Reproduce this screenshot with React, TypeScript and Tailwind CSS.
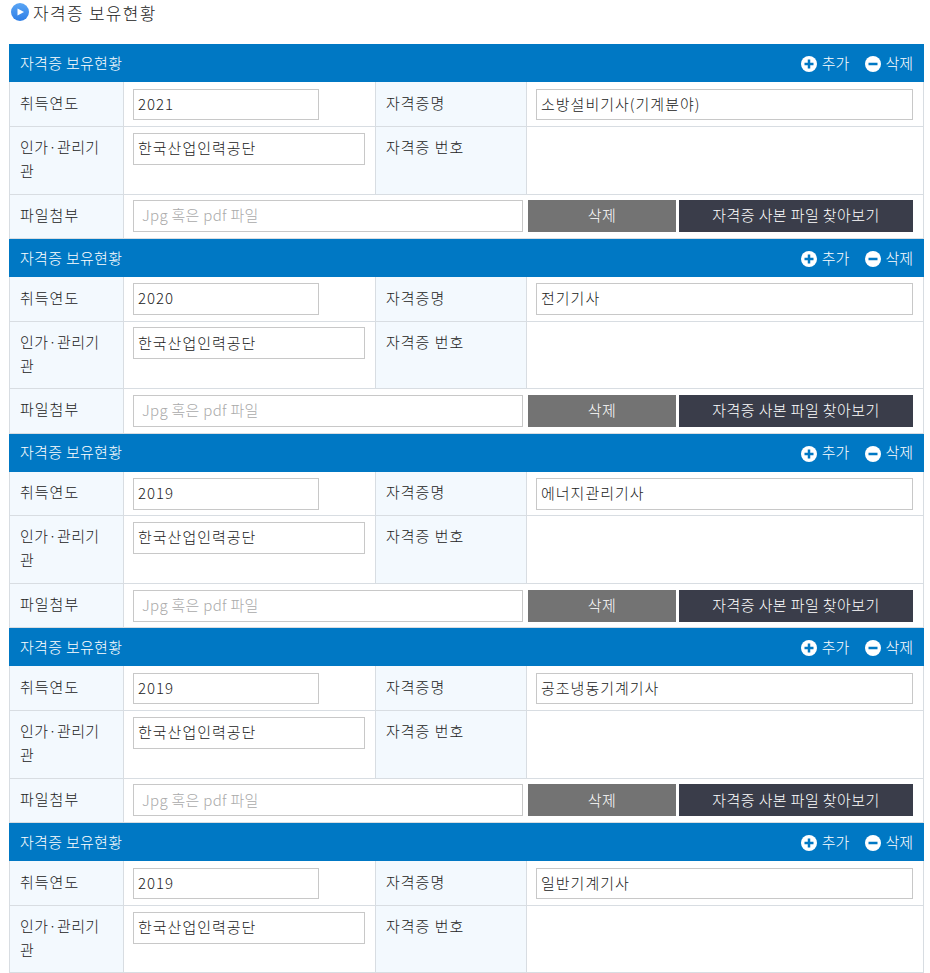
const font = { fontFamily: '"Noto Sans CJK KR", "Liberation Sans", sans-serif' };

const records = [
  { year: "2021", name: "소방설비기사(기계분야)" },
  { year: "2020", name: "전기기사" },
  { year: "2019", name: "에너지관리기사" },
  { year: "2019", name: "공조냉동기계기사" },
  { year: "2019", name: "일반기계기사" },
];

function RoundIcon({ plus }: { plus?: boolean }) {
  return (
    <svg width="16" height="16" viewBox="0 0 16 16" className="mt-[2px] shrink-0">
      <circle cx="8" cy="8" r="8" fill="#fff" />
      <rect x="3.5" y="6.75" width="9" height="2.5" fill="#0078c4" />
      {plus && <rect x="6.75" y="3.5" width="2.5" height="9" fill="#0078c4" />}
    </svg>
  );
}

function Field({ value, className }: { value: string; className: string }) {
  return (
    <div className={`flex items-center border border-[#c8c8c8] bg-white pb-[1px] pl-[4px] text-[15px] font-light tracking-[1px] text-[#222] ${className}`}>
      {value}
    </div>
  );
}

function Label({ children, className = "" }: { children: React.ReactNode; className?: string }) {
  return <div className={`bg-[#f3f9fe] pl-[10px] text-[15px] font-light leading-[24px] tracking-[1px] text-[#222] ${className}`}>{children}</div>;
}

function Card({ year, name, last }: { year: string; name: string; last?: boolean }) {
  const midRow = last ? "h-[67px]" : "h-[67.75px]";
  return (
    <section className={last ? "" : "h-[194.75px] overflow-hidden"}>
      <div className="flex h-[38px] items-center justify-between bg-[#0078c4] pl-[11px] pr-[11px] text-[15px] font-light text-white">
        <span className="tracking-[0.3px]">자격증 보유현황</span>
        <div className="flex items-center gap-[16px]">
          <span className="flex items-center gap-[5px]"><RoundIcon plus />추가</span>
          <span className="flex items-center gap-[4px]"><RoundIcon />삭제</span>
        </div>
      </div>
      <div className="grid grid-cols-[114px_251px_152px_1fr] border-x border-[#d8dde2] [&>*]:border-b [&>*]:border-[#d8dde2]">
        <Label className="flex h-[44.75px] items-center border-r !border-r-[#d8dde2] pb-[2px]">취득연도</Label>
        <div className="flex h-[44.75px] items-start pl-[9px] pt-[6.5px]"><Field value={year} className="h-[31.5px] w-[186px]" /></div>
        <Label className="flex h-[44.75px] items-center border-x !border-x-[#d8dde2] pb-[2px]">자격증명</Label>
        <div className="flex h-[44.75px] items-start pl-[9px] pt-[6.5px]"><Field value={name} className="h-[31.5px] w-[377px]" /></div>

        <Label className={`${midRow} border-r !border-r-[#d8dde2] pr-[14px] pt-[8px] !tracking-[0.4px]`}>인가·관리기관</Label>
        <div className={`${midRow} pl-[9px] pt-[5.75px]`}><Field value="한국산업인력공단" className="h-[32px] w-[232px]" /></div>
        <Label className={`${midRow} border-x !border-x-[#d8dde2] pt-[8px]`}>자격증 번호</Label>
        <div className={midRow} />

        {!last && (
          <>
            <Label className="flex h-[44.25px] items-center border-r !border-r-[#d8dde2] pb-[3px]">파일첨부</Label>
            <div className="col-span-3 flex h-[44.25px] items-start pl-[9px] pt-[5.5px]">
              <div className="flex h-[32px] w-[390px] items-center border border-[#c8c8c8] bg-white pb-[1px] pl-[8px] text-[15px] font-light tracking-[0.3px] text-[#aaa]">Jpg 혹은 pdf 파일</div>
              <button className="ml-[5px] h-[32px] w-[148px] bg-[#737373] pb-[1px] text-[15px] font-light tracking-[0.4px] text-white">삭제</button>
              <button className="ml-[3px] h-[32px] w-[234px] bg-[#3a3d4a] pb-[1px] text-[15px] font-light tracking-[0.4px] text-white">자격증 사본 파일 찾아보기</button>
            </div>
          </>
        )}
      </div>
    </section>
  );
}

export default function App() {
  return (
    <div className="h-[973px] w-[930px] overflow-hidden bg-white" style={font}>
      <div className="flex h-[44px] items-start pl-[11px] pt-[3px]">
        <svg width="18" height="18" viewBox="0 0 18 18" className="shrink-0">
          <defs>
            <linearGradient id="ball" x1="0" y1="0" x2="0" y2="1">
              <stop offset="0" stopColor="#5aa5f5" />
              <stop offset="1" stopColor="#2f7fe6" />
            </linearGradient>
          </defs>
          <circle cx="9" cy="9" r="9" fill="url(#ball)" />
          <path d="M6.5 5.5 L13 9 L6.5 12.5 Z" fill="#fff" />
        </svg>
        <h2 className="ml-[4px] text-[17px] font-light leading-[20px] tracking-[1.3px] text-[#222]">자격증 보유현황</h2>
      </div>
      <div className="ml-[9px] w-[915px]">
        {records.map((r, i) => (
          <Card key={i} year={r.year} name={r.name} last={i === records.length - 1} />
        ))}
      </div>
    </div>
  );
}
